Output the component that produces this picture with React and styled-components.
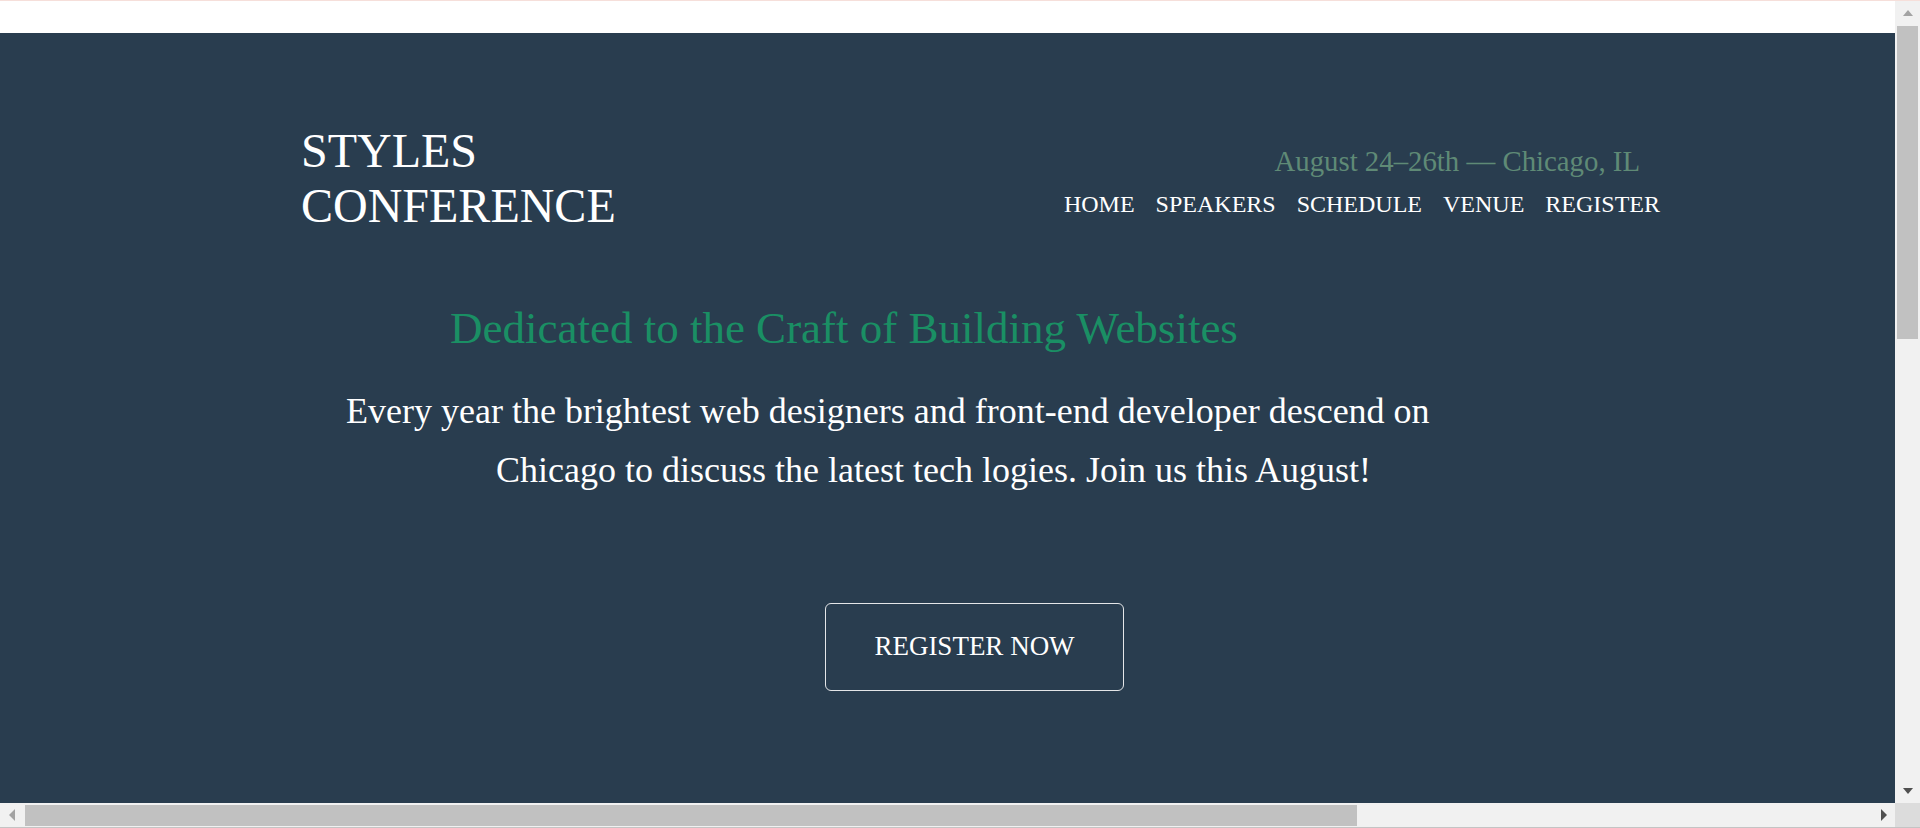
import React from "react";
import styled, { createGlobalStyle } from "styled-components";

const GlobalStyle = createGlobalStyle`
  html, body {
    margin: 0;
    padding: 0;
    overflow: hidden;
  }
  body {
    background: #ffffff;
    font-family: "Liberation Serif", "Times New Roman", serif;
    color: #ffffff;
  }
`;

/* ---------- browser frame (viewport + classic scrollbars) ---------- */

const Frame = styled.div`
  box-sizing: border-box;
  width: 100vw;
  height: 828px;
  border-top: 1px solid #f6dfda;
  display: grid;
  grid-template-columns: 1fr 25px;
  grid-template-rows: 1fr 25px;
`;

const Viewport = styled.div`
  min-height: 0;
  overflow: hidden;
  background: #ffffff;
  padding-top: 32px;
  display: flex;
  flex-direction: column;
`;

const VBar = styled.div`
  background: #f1f1f1;
  display: flex;
  flex-direction: column;
`;

const HBar = styled.div`
  background: #f1f1f1;
  border-bottom: 1px solid #c4c4c4;
  padding-bottom: 1px;
  display: flex;
  align-items: stretch;
`;

const Corner = styled.div`
  background: #dcdcdc;
  border-bottom: 1px solid #c4c4c4;
`;

const ArrowBtn = styled.div`
  flex: 0 0 ${(p) => p.$size}px;
  display: flex;
  align-items: center;
  justify-content: center;
`;

const Spacer = styled.div`
  flex: 1;
`;

const Tri = styled.span`
  width: 0;
  height: 0;
  ${(p) =>
    p.$dir === "up" &&
    `border-left: 5.5px solid transparent; border-right: 5.5px solid transparent; border-bottom: 6px solid ${p.$color};`}
  ${(p) =>
    p.$dir === "down" &&
    `border-left: 5.5px solid transparent; border-right: 5.5px solid transparent; border-top: 6px solid ${p.$color};`}
  ${(p) =>
    p.$dir === "left" &&
    `border-top: 6px solid transparent; border-bottom: 6px solid transparent; border-right: 6px solid ${p.$color};`}
  ${(p) =>
    p.$dir === "right" &&
    `border-top: 6px solid transparent; border-bottom: 6px solid transparent; border-left: 6px solid ${p.$color};`}
`;

const VThumb = styled.div`
  margin: 1px 2px 0 2px;
  height: 313px;
  background: #c1c1c1;
`;

const HThumb = styled.div`
  margin: 2px 0 0 2px;
  width: 1332px;
  background: #c1c1c1;
`;

/* ---------- page ---------- */

const Hero = styled.section`
  flex: 1;
  box-sizing: border-box;
  background: #293d4f;
  padding: 90px 0 0 301px;
`;

const Header = styled.header`
  width: 1359px;
  display: flex;
  justify-content: space-between;
  align-items: flex-start;
`;

const Logo = styled.h1`
  margin: 0;
  width: 330px;
  font-size: 48px;
  font-weight: 400;
  line-height: normal;
  color: #ffffff;
`;

const Meta = styled.div`
  margin-top: 22px;
  display: flex;
  flex-direction: column;
  align-items: flex-end;
`;

const DateLine = styled.p`
  margin: 0 20px 0 0;
  font-size: 28.8px;
  line-height: normal;
  color: #5f8a76;
`;

const Nav = styled.nav`
  margin-top: 13px;
  display: flex;
  gap: 21px;
`;

const NavLink = styled.a`
  font-size: 24px;
  line-height: normal;
  color: #ffffff;
  text-decoration: none;
`;

const Title = styled.h2`
  margin: 69px 0 0 149px;
  font-size: 45px;
  font-weight: 400;
  line-height: normal;
  color: #1a8f64;
`;

const Lead = styled.p`
  margin: 28px 0 0 0;
  padding-left: 195px;
  width: 1000px;
  text-indent: -150px;
  font-size: 36px;
  line-height: 59.4px;
  color: #ffffff;
`;

const CTA = styled.a`
  box-sizing: border-box;
  margin: 102px 0 0 524px;
  width: 299px;
  height: 88px;
  display: flex;
  align-items: center;
  justify-content: center;
  border: 1px solid #e4e6e8;
  border-radius: 6px;
  font-size: 27px;
  color: #ffffff;
  text-decoration: none;
`;

const links = ["HOME", "SPEAKERS", "SCHEDULE", "VENUE", "REGISTER"];

export default function App() {
  return (
    <>
      <GlobalStyle />
      <Frame>
        <Viewport>
          <Hero>
            <Header>
              <Logo>STYLES CONFERENCE</Logo>
              <Meta>
                <DateLine>August 24–26th — Chicago, IL</DateLine>
                <Nav>
                  {links.map((l) => (
                    <NavLink key={l} href="#">
                      {l}
                    </NavLink>
                  ))}
                </Nav>
              </Meta>
            </Header>
            <Title>Dedicated to the Craft of Building Websites</Title>
            <Lead>
              Every year the brightest web designers and front-end developer descend on
              Chicago to discuss the latest tech logies. Join us this August!
            </Lead>
            <CTA href="#">REGISTER NOW</CTA>
          </Hero>
        </Viewport>
        <VBar>
          <ArrowBtn $size={24}>
            <Tri $dir="up" $color="#a3a3a3" />
          </ArrowBtn>
          <VThumb />
          <Spacer />
          <ArrowBtn $size={24}>
            <Tri $dir="down" $color="#505050" />
          </ArrowBtn>
        </VBar>
        <HBar>
          <ArrowBtn $size={23}>
            <Tri $dir="left" $color="#a3a3a3" />
          </ArrowBtn>
          <HThumb />
          <Spacer />
          <ArrowBtn $size={23}>
            <Tri $dir="right" $color="#505050" />
          </ArrowBtn>
        </HBar>
        <Corner />
      </Frame>
    </>
  );
}
